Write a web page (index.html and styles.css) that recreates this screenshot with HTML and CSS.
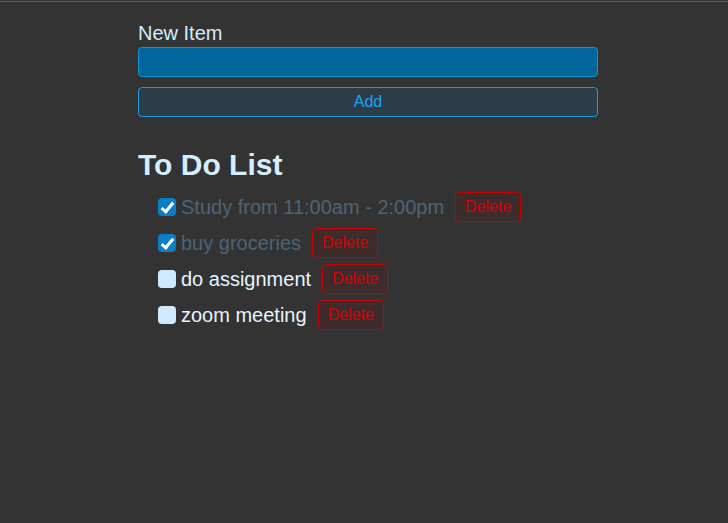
FILE: index.html
```html
<!DOCTYPE html>
<html>
<head>
<meta charset="utf-8">
<link rel="stylesheet" href="styles.css">
</head>
<body>
<div class="topline"></div>
<main class="app">
  <form class="new-form">
    <label class="new-label" for="item">New Item</label>
    <input class="new-input" id="item" type="text">
    <button class="add-btn" type="button">Add</button>
  </form>
  <h1 class="list-title">To Do List</h1>
  <ul class="todo-list">
    <li class="todo done"><input type="checkbox" class="check" checked><span class="todo-text">Study from 11:00am - 2:00pm</span><button class="del-btn" type="button">Delete</button></li>
    <li class="todo done"><input type="checkbox" class="check" checked><span class="todo-text">buy groceries</span><button class="del-btn" type="button">Delete</button></li>
    <li class="todo"><input type="checkbox" class="check"><span class="todo-text">do assignment</span><button class="del-btn" type="button">Delete</button></li>
    <li class="todo"><input type="checkbox" class="check"><span class="todo-text">zoom meeting</span><button class="del-btn" type="button">Delete</button></li>
  </ul>
</main>
</body>
</html>
```
FILE: styles.css
```css
html, body {
  margin: 0;
  padding: 0;
  background: #333333;
  font-family: "Liberation Sans", Arial, sans-serif;
}
.topline {
  margin-top: 1px;
  height: 1px;
  background: #5c5c5e;
}
.app {
  width: 460px;
  margin-left: 138px;
  padding-top: 20px;
}
.new-form {
  display: flex;
  flex-direction: column;
  margin: 0;
}
.new-label {
  color: #d2ecfb;
  font-size: 20px;
  line-height: 23px;
  margin-bottom: 2px;
}
.new-input {
  box-sizing: border-box;
  height: 30px;
  margin: 0;
  background: #006699;
  border: 1px solid #1192d4;
  border-radius: 4px;
  outline: none;
}
.add-btn {
  box-sizing: border-box;
  height: 30px;
  margin-top: 10px;
  background: #2d3d47;
  border: 1px solid #179ee6;
  border-radius: 4px;
  color: #1ca4ff;
  font-family: inherit;
  font-size: 16px;
  padding: 0;
}
.list-title {
  margin: 31px 0 7px 0;
  color: #d4eefe;
  font-size: 30px;
  line-height: 34px;
  font-weight: bold;
}
.todo-list {
  list-style: none;
  margin: 0;
  padding: 0 0 0 20px;
}
.todo {
  display: flex;
  align-items: center;
  height: 36px;
}
.check {
  appearance: none;
  -webkit-appearance: none;
  box-sizing: border-box;
  width: 18px;
  height: 18px;
  margin: 0 5px 0 0;
  border-radius: 4px;
  background: #cfeaff;
  position: relative;
}
.check:checked {
  background: #0a7fc4;
}
.check:checked::after {
  content: "";
  position: absolute;
  left: 6px;
  top: 2px;
  width: 4px;
  height: 10px;
  border: solid #ffffff;
  border-width: 0 3px 3px 0;
  transform: rotate(40deg);
}
.todo-text {
  font-size: 20px;
  line-height: 23px;
  color: #e6f5ff;
}
.done .todo-text {
  color: #4b6577;
}
.del-btn {
  box-sizing: border-box;
  height: 30px;
  margin-left: 11px;
  padding: 0 9px;
  background: #3e2c2c;
  border: 1px solid #c80000;
  border-radius: 4px;
  color: #d80000;
  font-family: inherit;
  font-size: 16px;
}
```
